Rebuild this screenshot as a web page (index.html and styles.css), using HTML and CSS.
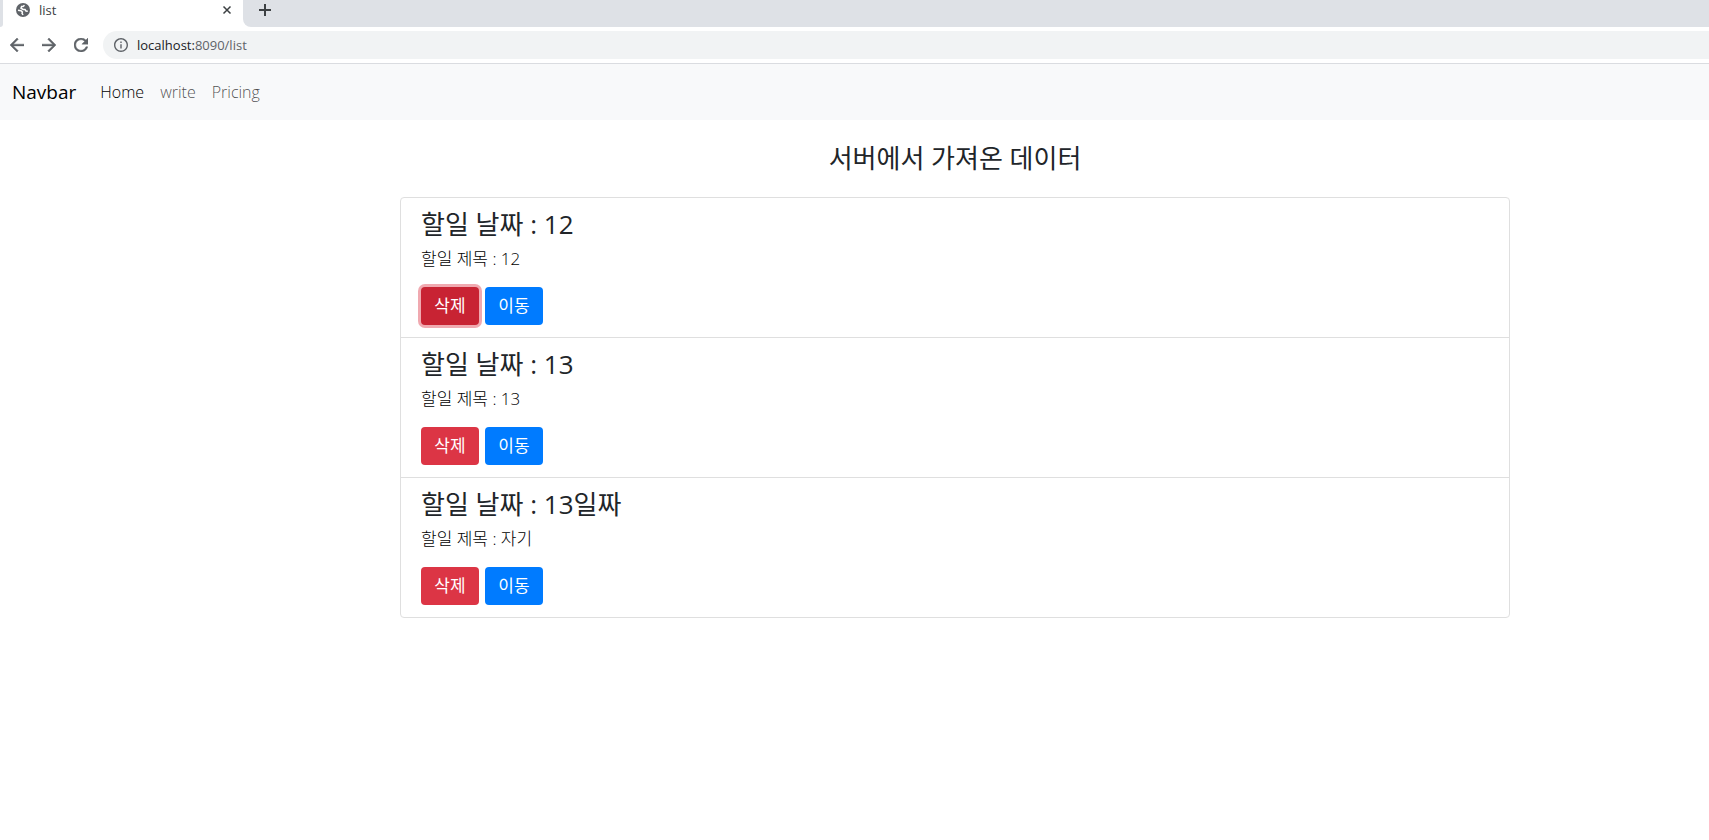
FILE: index.html
```html
<!DOCTYPE html>
<html lang="ko">

<head>
    <title>list</title>
    <meta charset="UTF-8">
    <meta name="viewport" content="width=device-width, initial-scale=1">
    <link rel="stylesheet" href="styles.css">
</head>

<body>
    <header class="browser">
        <div class="tabs">
            <div class="tab-before"></div>
            <div class="tab">
                <svg class="globe" viewBox="0 0 14 14">
                    <circle cx="7" cy="7" r="7"/>
                    <path d="M8.500 2.200L7 3.600H5.600L5 5.200l2 1.300h2l1 1.500 1.800.200M2 7.200l3 .600 1.400 1.200-.400 1.200L7 12"/>
                </svg>
                <span class="tab-title">list</span>
                <button class="icon-btn" aria-label="Close tab">
                    <svg class="close" viewBox="0 0 10 10"><path d="M1.500 1.500l7 7M8.500 1.500l-7 7"/></svg>
                </button>
            </div>
            <div class="tab-after">
                <button class="icon-btn" aria-label="New tab">
                    <svg class="plus" viewBox="0 0 12 12"><path d="M6 0v12M0 6h12"/></svg>
                </button>
            </div>
        </div>
        <div class="toolbar">
            <button class="icon-btn" aria-label="Back">
                <svg class="nav-icon bold" viewBox="4 4 16 16"><path d="M20 11H7.830l5.590-5.590L12 4l-8 8 8 8 1.410-1.410L7.830 13H20v-2z"/></svg>
            </button>
            <button class="icon-btn" aria-label="Forward">
                <svg class="nav-icon bold" viewBox="4 4 16 16"><path d="M12 4l-1.410 1.410L16.170 11H4v2h12.170l-5.580 5.590L12 20l8-8z"/></svg>
            </button>
            <button class="icon-btn" aria-label="Reload">
                <svg class="nav-icon bold" viewBox="4 4 16 16"><path d="M17.650 6.350C16.200 4.900 14.210 4 12 4c-4.420 0-7.990 3.580-7.990 8s3.570 8 7.990 8c3.730 0 6.840-2.550 7.730-6h-2.080c-.820 2.330-3.040 4-5.650 4-3.310 0-6-2.690-6-6s2.690-6 6-6c1.660 0 3.140.690 4.220 1.780L13 11h7V4l-2.350 2.350z"/></svg>
            </button>
            <div class="address">
                <svg class="nav-icon" viewBox="2 2 20 20"><path d="M11 7h2v2h-2zm0 4h2v6h-2zm1-9C6.480 2 2 6.480 2 12s4.480 10 10 10 10-4.480 10-10S17.520 2 12 2zm0 18c-4.410 0-8-3.590-8-8s3.590-8 8-8 8 3.590 8 8-3.590 8-8 8z"/></svg>
                <div class="url" role="textbox" contenteditable="true" spellcheck="false" aria-label="Address">localhost:<span class="path">8090/list</span></div>
            </div>
        </div>
    </header>

    <nav class="navbar">
        <a class="brand" href="#">Navbar</a>
        <a class="nav-link active" href="#">Home</a>
        <a class="nav-link" href="#">write</a>
        <a class="nav-link" href="#">Pricing</a>
    </nav>

    <main class="container">
        <h4 class="title">서버에서 가져온 데이터</h4>
        <ul class="card">
            <li class="item">
                <h4>할일 날짜 : 12</h4>
                <p>할일 제목 : 12</p>
                <div class="buttons">
                    <button class="btn danger focus">삭제</button>
                    <button class="btn primary">이동</button>
                </div>
            </li>
            <li class="item">
                <h4>할일 날짜 : 13</h4>
                <p>할일 제목 : 13</p>
                <div class="buttons">
                    <button class="btn danger">삭제</button>
                    <button class="btn primary">이동</button>
                </div>
            </li>
            <li class="item">
                <h4>할일 날짜 : 13일짜</h4>
                <p>할일 제목 : 자기</p>
                <div class="buttons">
                    <button class="btn danger">삭제</button>
                    <button class="btn primary">이동</button>
                </div>
            </li>
        </ul>
    </main>
</body>

</html>
```
FILE: styles.css
```css
* {
    box-sizing: border-box;
    padding: 0;
    margin: 0;
}

body {
    font-family: "Open Sans", "Noto Sans CJK KR", sans-serif;
    font-size: 16px;
    line-height: 24px;
    color: #212529;
    background-color: #fff;
}

button {
    border: none;
    font: inherit;
    cursor: pointer;
}

a {
    text-decoration: none;
}

/* browser bar */

.browser {
    border-bottom: 1px solid #dadce0;
    font-size: 13px;
}

.tabs {
    display: flex;
    height: 27px;
}

.tab-before {
    width: 3px;
    background-color: #dee1e6;
    border-bottom-right-radius: 8px;
}

.tab {
    display: flex;
    align-items: center;
    width: 240px;
    padding: 0 11px 8px 13px;
}

.tab-title {
    flex: 1;
    margin-left: 9px;
    font-size: 13px;
    line-height: 18px;
    color: #3c4043;
}

.tab-after {
    flex: 1;
    display: flex;
    align-items: center;
    padding: 0 16px 8px;
    background-color: #dee1e6;
    border-bottom-left-radius: 8px;
}

.icon-btn {
    display: flex;
    background: none;
}

.globe {
    width: 14px;
    height: 14px;
    fill: #5f6368;
}

.globe path {
    fill: none;
    stroke: #fff;
    stroke-width: 1.5;
}

.close {
    width: 10px;
    height: 10px;
    stroke: #3c4043;
    stroke-width: 1.5;
}

.plus {
    width: 12px;
    height: 12px;
    stroke: #3c4043;
    stroke-width: 2;
}

.toolbar {
    display: flex;
    align-items: center;
    gap: 18px;
    height: 36px;
    padding-left: 10px;
}

.nav-icon {
    width: 14px;
    height: 14px;
    fill: #5f6368;
}

.nav-icon.bold {
    stroke: #5f6368;
    stroke-width: 0.5;
}

.address {
    flex: 1;
    display: flex;
    align-items: center;
    gap: 9px;
    height: 28px;
    margin-left: -3px;
    padding-left: 11px;
    background-color: #f1f3f4;
    border-radius: 14px 0 0 14px;
}

.url {
    color: #202124;
}

.path {
    color: #5f6368;
}

/* navbar */

.navbar {
    display: flex;
    align-items: center;
    height: 56px;
    padding: 0 12px;
    background-color: #f8f9fa;
}

.brand {
    margin-right: 16px;
    font-size: 19px;
    color: #000;
}

.nav-link {
    padding: 0 8px;
    font-weight: 300;
    color: rgba(0, 0, 0, 0.7);
}

.nav-link.active {
    color: #000;
}

/* list */

.container {
    padding: 24px 199px 24px 400px;
}

h4 {
    font-size: 26px;
    font-weight: 400;
    line-height: 29px;
}

.title {
    margin-bottom: 24px;
    text-align: center;
}

.card {
    list-style: none;
    border: 1px solid #dfdfdf;
    border-radius: 4px;
}

.item {
    padding: 12px 20px;
}

.item + .item {
    border-top: 1px solid #dfdfdf;
}

.item p {
    margin: 8px 0 16px;
    font-size: 17px;
    font-weight: 300;
    color: #000;
}

.buttons {
    display: flex;
    gap: 6px;
}

.btn {
    width: 58px;
    height: 38px;
    border-radius: 4px;
    font-size: 17px;
    color: #fff;
}

.danger {
    background-color: #dc3545;
}

.danger.focus {
    background-color: #c82333;
    box-shadow: 0 0 0 3px rgba(225, 83, 97, 0.5);
}

.primary {
    background-color: #007bff;
}
```
